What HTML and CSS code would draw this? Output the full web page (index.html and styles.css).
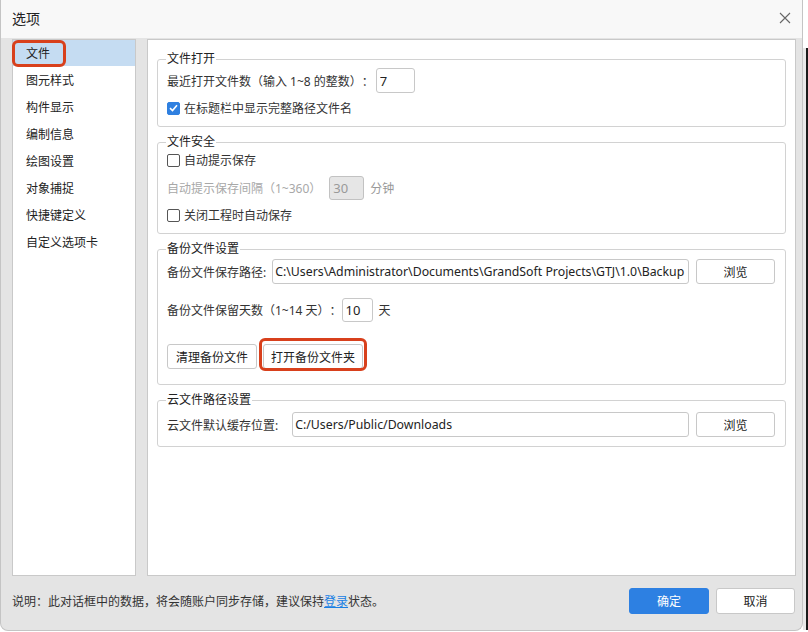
FILE: index.html
```html
<!DOCTYPE html>
<html lang="zh-CN">
<head>
    <meta charset="UTF-8">
    <title>选项</title>
    <link rel="stylesheet" href="styles.css">
</head>
<body>
    <div class="screen">
        <div class="dialog">
            <div class="titlebar">
                <span class="title">选项</span>
                <svg class="close" width="12" height="12" viewBox="0 0 12 12">
                    <path d="M1 1 L11 11 M11 1 L1 11" stroke="#666" stroke-width="1.1" fill="none"/>
                </svg>
            </div>

            <div class="main">
                <ul class="nav">
                    <li class="nav-item selected">文件</li>
                    <li class="nav-item">图元样式</li>
                    <li class="nav-item">构件显示</li>
                    <li class="nav-item">编制信息</li>
                    <li class="nav-item">绘图设置</li>
                    <li class="nav-item">对象捕捉</li>
                    <li class="nav-item">快捷键定义</li>
                    <li class="nav-item">自定义选项卡</li>
                </ul>

                <div class="content">
                    <!-- 文件打开 -->
                    <fieldset class="group g-open">
                        <legend>文件打开</legend>
                        <div class="row r1">
                            <span>最近打开文件数（输入 1~8 的整数）：</span>
                            <input class="field num" type="text" value="7">
                        </div>
                        <label class="row check r2">
                            <span class="box checked">
                                <svg width="9" height="8" viewBox="0 0 9 8"><path d="M1 4.2 L3.5 6.5 L8 1.2" stroke="#fff" stroke-width="1.6" fill="none"/></svg>
                            </span>
                            在标题栏中显示完整路径文件名
                        </label>
                    </fieldset>

                    <!-- 文件安全 -->
                    <fieldset class="group g-safe">
                        <legend>文件安全</legend>
                        <label class="row check ra">
                            <span class="box"></span>
                            自动提示保存
                        </label>
                        <div class="row rb disabled">
                            <span>自动提示保存间隔（1~360）</span>
                            <input class="field mins" type="text" value="30" disabled>
                            <span class="unit">分钟</span>
                        </div>
                        <label class="row check rc">
                            <span class="box"></span>
                            关闭工程时自动保存
                        </label>
                    </fieldset>

                    <!-- 备份文件设置 -->
                    <fieldset class="group g-backup">
                        <legend>备份文件设置</legend>
                        <div class="row path-row">
                            <span>备份文件保存路径:</span>
                            <input class="field path" type="text" value="C:\Users\Administrator\Documents\GrandSoft Projects\GTJ\1.0\Backup">
                            <button class="btn browse">浏览</button>
                        </div>
                        <div class="row days-row">
                            <span>备份文件保留天数（1~14 天）：</span>
                            <input class="field days" type="text" value="10">
                            <span class="unit-day">天</span>
                        </div>
                        <div class="row btn-row">
                            <button class="btn clean">清理备份文件</button>
                            <button class="btn marked">打开备份文件夹</button>
                        </div>
                    </fieldset>

                    <!-- 云文件路径设置 -->
                    <fieldset class="group g-cloud">
                        <legend>云文件路径设置</legend>
                        <div class="row cloud-row">
                            <span>云文件默认缓存位置:</span>
                            <input class="field path" type="text" value="C:/Users/Public/Downloads">
                            <button class="btn browse">浏览</button>
                        </div>
                    </fieldset>
                </div>
            </div>

            <div class="footer">
                <p class="note">说明：此对话框中的数据，将会随账户同步存储，建议保持<a href="#">登录</a>状态。</p>
                <button class="btn primary">确定</button>
                <button class="btn cancel">取消</button>
            </div>
        </div>
        <div class="edge"></div>
    </div>
</body>
</html>
```

FILE: styles.css
```css
*, *::before, *::after {
    box-sizing: border-box;
}

body {
    margin: 0;
    background: #ffffff;
    font-family: "Noto Sans", "Noto Sans CJK SC", sans-serif;
    font-size: 12px;
    color: #333;
    text-spacing-trim: space-all;
}

.screen {
    display: flex;
    width: 808px;
    height: 632px;
}

.dialog {
    width: 803px;
    height: 631px;
    background: #e4e4e4;
    border: 1px solid #c4c4c4;
    border-top: none;
    border-radius: 0 0 8px 8px;
    display: flex;
    flex-direction: column;
}

.edge {
    width: 5px;
    margin-top: 48px;
    height: 582px;
    background: #e8e8e8;
    border-right: 2px solid #1a1a1a;
}

.titlebar {
    height: 38px;
    background: #f8f8f8;
    display: flex;
    align-items: center;
    justify-content: space-between;
    padding: 0 11px 2px 11px;
}

.title {
    font-size: 14px;
    color: #222;
}

.main {
    display: flex;
    gap: 11px;
    padding: 1px 6px 0 11px;
    height: 538px;
}

.nav {
    list-style: none;
    margin: 0;
    padding: 0;
    width: 124px;
    background: #fff;
    border: 1px solid #c9c9c9;
}

.nav-item {
    height: 27px;
    line-height: 28px;
    padding-left: 13px;
    color: #222;
}

.nav-item.selected {
    background: #c5dcf2;
    position: relative;
    height: 26px;
    line-height: 27px;
    margin-bottom: 1px;
}

.nav-item.selected::after {
    content: "";
    position: absolute;
    left: -1px;
    top: 0;
    width: 54px;
    height: 27px;
    border: 3px solid #d8401c;
    border-radius: 6px;
}

.content {
    flex: 1;
    background: #fff;
    border: 1px solid #c9c9c9;
    padding: 11px 9px 0 9px;
}

.group {
    margin: 0;
    min-width: 0;
    border: 1px solid #d2d2d2;
    border-radius: 3px;
    padding: 0 10px 8px 9px;
}

.group legend {
    padding: 0 1px;
    margin-left: -1px;
    line-height: 16px;
    color: #222;
}

.group + .group {
    margin-top: 7px;
}

.row {
    display: flex;
    align-items: center;
    color: #333;
}

.field {
    height: 25px;
    min-width: 0;
    border: 1px solid #c8c8c8;
    border-radius: 3px;
    background: #fff;
    font-family: inherit;
    font-size: 13px;
    color: #222;
    padding: 0 3px;
    outline: none;
}

.field.num {
    width: 39px;
    margin-left: 2px;
}

.check {
    height: 20px;
    gap: 4px;
}

.box {
    width: 13px;
    height: 13px;
    border: 1px solid #555;
    border-radius: 2px;
    background: #fff;
    display: flex;
    align-items: center;
    justify-content: center;
}

.box.checked {
    background: #2f80e0;
    border-color: #2f80e0;
}

.r1 { margin-top: 1px; height: 25px; }
.r2 { margin-top: 5px; }

.ra { margin-top: 0; }
.rb { margin-top: 6px; height: 24px; }
.rc { margin-top: 5px; }

.disabled {
    color: #a8a8a8;
}

.field.mins {
    width: 35px;
    height: 24px;
    margin-left: 8px;
    background: #e6e6e6;
    border-color: #c2c2c2;
    color: #999;
}

.unit {
    margin-left: 6px;
    color: #999;
}

.path-row { margin-top: 2px; }

.field.path {
    flex: 1;
    margin-left: 6px;
    font-size: 12.3px;
    padding: 0 2px;
}

.btn {
    height: 25px;
    border: 1px solid #c8c8c8;
    border-radius: 3px;
    background: #fff;
    font-family: inherit;
    font-size: 12px;
    color: #222;
    padding: 0;
    white-space: nowrap;
}

.browse {
    width: 79px;
    margin-left: 7px;
}

.days-row { margin-top: 14px; height: 24px; }

.field.days {
    width: 31px;
    height: 24px;
}

.unit-day {
    margin-left: 6px;
}

.btn-row {
    margin-top: 22px;
    gap: 6px;
}

.clean {
    width: 90px;
}

.g-backup {
    padding-bottom: 15px;
}

.marked {
    position: relative;
    width: 100px;
}

.marked::after {
    content: "";
    position: absolute;
    left: -5px;
    top: -7px;
    right: -5px;
    bottom: -3px;
    border: 3px solid #d8401c;
    border-radius: 6px;
}

.cloud-row { margin-top: 4px; }

.g-cloud {
    padding-bottom: 9px;
}

.g-cloud .field.path {
    margin-left: 14px;
}

.footer {
    flex: 1;
    display: flex;
    align-items: center;
    padding: 0 7px 4px 11px;
}

.note {
    margin: 0;
    flex: 1;
    color: #333;
}

.note a {
    color: #1a7fe3;
}

.primary {
    width: 80px;
    height: 26px;
    background: #2d80e2;
    border-color: #2d80e2;
    color: #fff;
}

.cancel {
    width: 79px;
    height: 26px;
    margin-left: 7px;
}
```
